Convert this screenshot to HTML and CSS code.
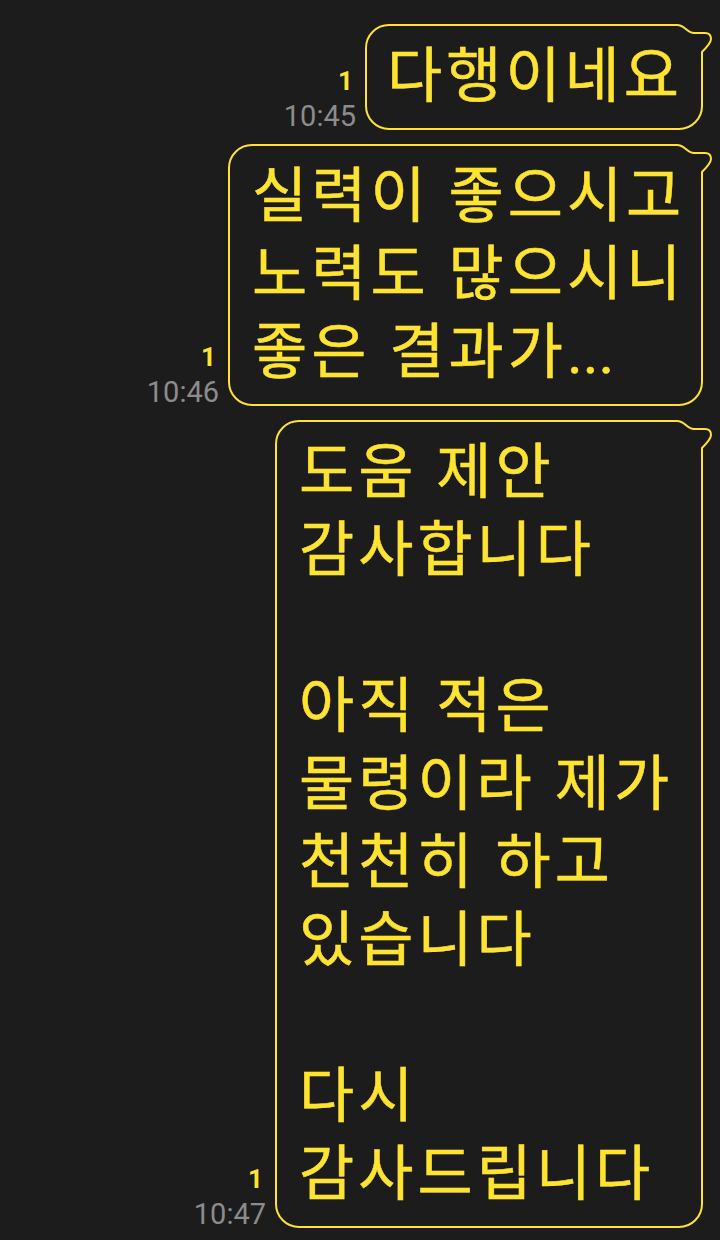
FILE: index.html
```html
<!DOCTYPE html>
<html lang="ko">
<head>
<meta charset="utf-8">
<title>Chat</title>
<link rel="stylesheet" href="styles.css">
</head>
<body>
<main class="chat">
  <div class="row">
    <div class="meta">
      <span class="unread">1</span>
      <span class="time">10:45</span>
    </div>
    <div class="bubble">
      <svg class="tail" width="52" height="46" viewBox="0 0 52 46" aria-hidden="true"><rect x="0" y="0" width="52" height="46" class="tail-bg"/><path d="M0 1 H14 C22 1 24 9 31 9 H42 Q48 9 48 15 Q48 19 39 28 V46" class="tail-line"/></svg>
      <p class="msg">다행이네요</p>
    </div>
  </div>
  <div class="row">
    <div class="meta">
      <span class="unread">1</span>
      <span class="time">10:46</span>
    </div>
    <div class="bubble bubble-wide">
      <svg class="tail" width="52" height="46" viewBox="0 0 52 46" aria-hidden="true"><rect x="0" y="0" width="52" height="46" class="tail-bg"/><path d="M0 1 H14 C22 1 24 9 31 9 H42 Q48 9 48 15 Q48 19 39 28 V46" class="tail-line"/></svg>
      <p class="msg">실력이 좋으시고<br>노력도 많으시니<br>좋은 결과가<span class="dots">...</span></p>
    </div>
  </div>
  <div class="row">
    <div class="meta">
      <span class="unread">1</span>
      <span class="time">10:47</span>
    </div>
    <div class="bubble bubble-mid">
      <svg class="tail" width="52" height="46" viewBox="0 0 52 46" aria-hidden="true"><rect x="0" y="0" width="52" height="46" class="tail-bg"/><path d="M0 1 H14 C22 1 24 9 31 9 H42 Q48 9 48 15 Q48 19 39 28 V46" class="tail-line"/></svg>
      <p class="msg">도움 제안<br>감사합니다<br><br>아직 적은<br>물령이라 제가<br>천천히 하고<br>있습니다<br><br>다시<br>감사드립니다</p>
    </div>
  </div>
</main>
</body>
</html>
```
FILE: styles.css
```css
html, body {
  margin: 0;
  padding: 0;
  background: #1c1c1c;
}
body {
  width: 720px;
  height: 1240px;
  overflow: hidden;
}
.chat {
  display: flex;
  flex-direction: column;
  gap: 14px;
  padding: 24px 17px 0 0;
}
.row {
  display: flex;
  justify-content: flex-end;
  align-items: flex-end;
  gap: 9px;
}
.meta {
  display: flex;
  flex-direction: column;
  align-items: flex-end;
  font-family: Roboto, "Liberation Sans", sans-serif;
}
.unread {
  color: #fee330;
  font-size: 26px;
  font-weight: 700;
  line-height: 26px;
  margin: 0 3px 8px 0;
}
.time {
  color: #8c8c8c;
  font-size: 29px;
  line-height: 28px;
}
.bubble {
  position: relative;
  box-sizing: border-box;
  border: 2px solid #fee330;
  border-radius: 24px;
  background: #1c1c1c;
  padding: 12px 18px 12px 20px;
}
.bubble-wide {
  width: 475px;
  padding-left: 22px;
}
.bubble-mid {
  width: 428px;
  padding-left: 22px;
}
.tail {
  position: absolute;
  top: -2px;
  right: -14px;
  display: block;
}
.tail-bg {
  fill: #1c1c1c;
}
.tail-line {
  fill: none;
  stroke: #fee330;
  stroke-width: 2;
  stroke-linejoin: round;
  stroke-linecap: round;
}
.msg {
  position: relative;
  margin: 0;
  color: #fee330;
  font-family: Roboto, "Noto Sans CJK KR", sans-serif;
  font-size: 60px;
  font-weight: 400;
  -webkit-text-stroke: 0.5px #fee330;
  letter-spacing: 4px;
  line-height: 78px;
  white-space: nowrap;
}
.dots {
  letter-spacing: 0;
}
```
